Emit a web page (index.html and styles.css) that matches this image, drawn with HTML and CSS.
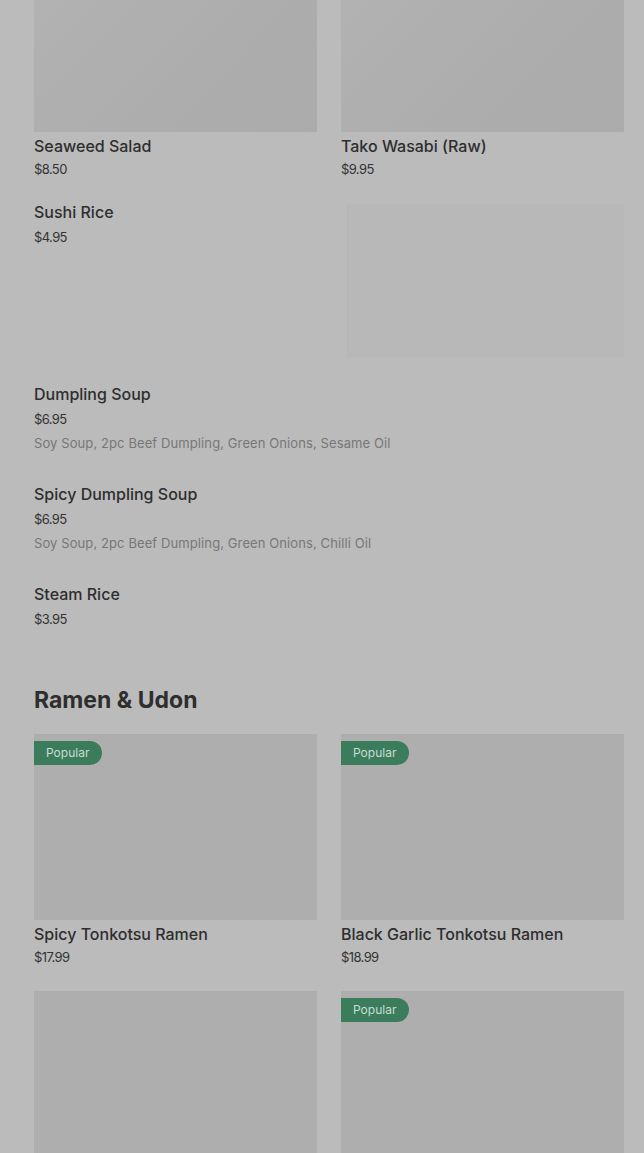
FILE: index.html
```html
<!DOCTYPE html>
<html lang="en">
<head>
  <meta charset="UTF-8">
  <meta name="viewport" content="width=device-width, initial-scale=1.0">
  <title>Menu</title>
  <link rel="stylesheet" href="styles.css">
</head>
<body>

  <div class="menu">
    <section class="menu-section">
      <div class="card-grid">
        <div class="card">
          <div class="card-img card-img-shade"></div>
          <div class="item-name">Seaweed Salad</div>
          <div class="item-price">$8.50</div>
        </div>
        <div class="card">
          <div class="card-img card-img-shade"></div>
          <div class="item-name">Tako Wasabi (Raw)</div>
          <div class="item-price">$9.95</div>
        </div>
      </div>

      <div class="item-list">
        <div class="list-item">
          <div class="list-text">
            <div class="item-name">Sushi Rice</div>
            <div class="item-price">$4.95</div>
          </div>
          <div class="list-img"></div>
        </div>
        <div class="list-item">
          <div class="list-text">
            <div class="item-name">Dumpling Soup</div>
            <div class="item-price">$6.95</div>
            <div class="item-desc">Soy Soup, 2pc Beef Dumpling, Green Onions, Sesame Oil</div>
          </div>
        </div>
        <div class="list-item">
          <div class="list-text">
            <div class="item-name">Spicy Dumpling Soup</div>
            <div class="item-price">$6.95</div>
            <div class="item-desc">Soy Soup, 2pc Beef Dumpling, Green Onions, Chilli Oil</div>
          </div>
        </div>
        <div class="list-item">
          <div class="list-text">
            <div class="item-name">Steam Rice</div>
            <div class="item-price">$3.95</div>
          </div>
        </div>
      </div>
    </section>

    <section class="menu-section">
      <h2 class="section-title">Ramen &amp; Udon</h2>
      <div class="card-grid">
        <div class="card">
          <div class="card-img tall">
            <span class="badge">Popular</span>
          </div>
          <div class="item-name">Spicy Tonkotsu Ramen</div>
          <div class="item-price">$17.99</div>
        </div>
        <div class="card">
          <div class="card-img tall">
            <span class="badge">Popular</span>
          </div>
          <div class="item-name">Black Garlic Tonkotsu Ramen</div>
          <div class="item-price">$18.99</div>
        </div>
        <div class="card">
          <div class="card-img tall"></div>
        </div>
        <div class="card">
          <div class="card-img tall">
            <span class="badge">Popular</span>
          </div>
        </div>
      </div>
    </section>
  </div>

</body>
</html>
```

FILE: styles.css
```css
body {
  margin: 0;
  font-family: Inter, "Noto Sans", sans-serif;
  color: #2f2f2f;
  background-color: #bbbbbb;
  overflow: hidden;
}

/* page is shown scrolled part way down the menu */
.menu {
  margin-top: -54px;
  padding: 0 20px 0 34px;
}

.card-grid {
  display: grid;
  grid-template-columns: 1fr 1fr;
  column-gap: 24px;
  row-gap: 24px;
}

.card-img {
  position: relative;
  height: 186px;
  background-color: #aeaeae;
}

.card-img-shade {
  background: linear-gradient(135deg, #b3b3b3 0%, #adadad 60%, #ababab 100%);
}

.badge {
  position: absolute;
  top: 7px;
  left: 0;
  height: 24px;
  padding: 0 13px 0 12px;
  line-height: 24px;
  font-size: 12px;
  color: #c9ddd2;
  background-color: #3b7c5c;
  border-radius: 0 12px 12px 0;
}

.item-name {
  font-size: 16px;
  font-weight: 500;
  line-height: 24px;
  color: #2e2e2e;
}

.card .item-name {
  margin-top: 2px;
}

.item-price {
  font-size: 13px;
  line-height: 20px;
  letter-spacing: -0.6px;
  color: #333;
  margin-top: 3px;
}

.card .item-price {
  margin-top: 1px;
}

.item-desc {
  font-size: 13px;
  line-height: 20px;
  letter-spacing: 0.1px;
  color: #777;
  margin-top: 4px;
}

.item-list {
  display: flex;
  flex-direction: column;
  gap: 24px;
  margin-top: 21px;
}

.list-item {
  display: flex;
  justify-content: space-between;
}

.list-text {
  padding-bottom: 5px;
}

.list-img {
  width: 276px;
  height: 154px;
  margin-top: 4px;
  background-color: #b8b8b8;
  border-left: 1px solid #b5b5b5;
}

.section-title {
  margin: 50px 0 18px;
  font-size: 23px;
  font-weight: 700;
  line-height: 32px;
  letter-spacing: 0;
  color: #2e2e2e;
}
```
